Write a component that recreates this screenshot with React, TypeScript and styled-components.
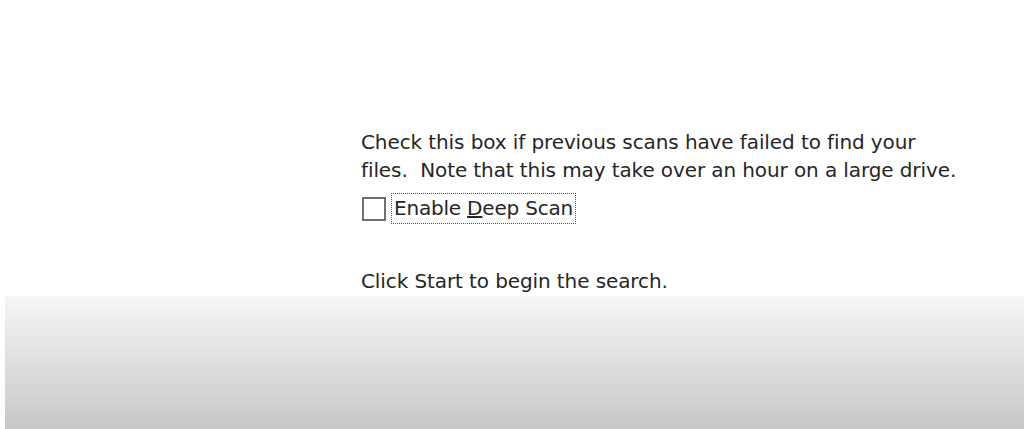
import React from 'react';
import styled, {createGlobalStyle} from 'styled-components';

const GlobalStyle = createGlobalStyle`
  html, body {
    margin: 0;
    padding: 0;
    height: 100%;
    background: #ffffff;
  }
  #root {
    height: 100%;
  }
`;

export default function App() {
  return (
    <>
      <GlobalStyle />
      <Wizard>
        <Body>
          <Paragraph>
            Check this box if previous scans have failed to find your
            <br />
            files.&nbsp; Note that this may take over an hour on a large drive.
          </Paragraph>

          <CheckRow>
            <Box type="checkbox" id="deep-scan" />
            <Label htmlFor="deep-scan">
              Enable <u>D</u>eep Scan
            </Label>
          </CheckRow>

          <Hint>Click Start to begin the search.</Hint>
        </Body>

        <Footer />
      </Wizard>
    </>
  );
}

const Wizard = styled.div`
  display: flex;
  flex-direction: column;
  height: 100%;
  font-family: 'DejaVu Sans', Tahoma, sans-serif;
  font-size: 20px;
  color: #262626;
`;

const Body = styled.div`
  flex: 1;
  display: flex;
  flex-direction: column;
  padding: 128px 0 0 361px;
`;

const Paragraph = styled.p`
  margin: 0;
  line-height: 28px;
  letter-spacing: -0.1px;
`;

const CheckRow = styled.div`
  display: flex;
  align-items: center;
  gap: 6px;
  margin-top: 10px;
`;

const Box = styled.input`
  appearance: none;
  margin: 0 0 0 1px;
  width: 24px;
  height: 24px;
  border: 2px solid #6f6f6f;
  background: #fff;
`;

const Label = styled.label`
  line-height: 27px;
  padding: 1px 2px;
  letter-spacing: -0.2px;
  outline: 1px dotted #555;

  u {
    text-decoration-thickness: 2px;
  }
`;

const Hint = styled.p`
  margin: 44px 0 0;
  line-height: 28px;
  letter-spacing: -0.1px;
`;

const Footer = styled.div`
  height: 133px;
  margin-left: 5px;
  background: linear-gradient(#f6f6f6, #c7c7c7);
`;
